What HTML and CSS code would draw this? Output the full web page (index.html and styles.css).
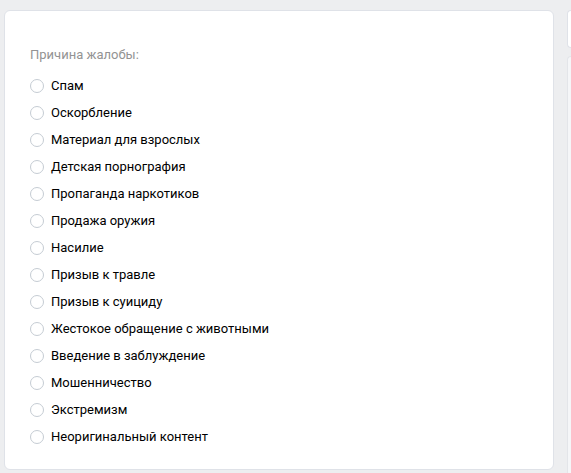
FILE: index.html
```html
<!DOCTYPE html>
<html lang="ru">

<head>
    <meta charset="UTF-8">
    <meta name="viewport" content="width=device-width, initial-scale=1.0">
    <title>Жалоба</title>
    <link rel="stylesheet" href="styles.css">
</head>

<body>

    <div class="page">
        <div class="report-box">
            <div class="report-title">Причина жалобы:</div>
            <div class="reasons">
                <label class="reason"><span class="radio"></span>Спам</label>
                <label class="reason"><span class="radio"></span>Оскорбление</label>
                <label class="reason"><span class="radio"></span>Материал для взрослых</label>
                <label class="reason"><span class="radio"></span>Детская порнография</label>
                <label class="reason"><span class="radio"></span>Пропаганда наркотиков</label>
                <label class="reason"><span class="radio"></span>Продажа оружия</label>
                <label class="reason"><span class="radio"></span>Насилие</label>
                <label class="reason"><span class="radio"></span>Призыв к травле</label>
                <label class="reason"><span class="radio"></span>Призыв к суициду</label>
                <label class="reason"><span class="radio"></span>Жестокое обращение с животными</label>
                <label class="reason"><span class="radio"></span>Введение в заблуждение</label>
                <label class="reason"><span class="radio"></span>Мошенничество</label>
                <label class="reason"><span class="radio"></span>Экстремизм</label>
                <label class="reason"><span class="radio"></span>Неоригинальный контент</label>
            </div>
        </div>

        <!-- edge of the next column -->
        <div class="side">
            <div class="side-top"></div>
            <div class="side-rest"></div>
        </div>
    </div>

</body>

</html>
```

FILE: styles.css
```css
* {
    box-sizing: border-box;
    margin: 0;
    padding: 0;
}

body {
    background-color: #edeef0;
    font-family: Roboto, "Liberation Sans", Arial, sans-serif;
    font-size: 13px;
    color: #000;
    overflow: hidden;
}

.page {
    display: flex;
    align-items: flex-start;
    width: 100%;
    padding: 10px 0 0 4px;
    gap: 13px;
}

.report-box {
    width: 550px;
    height: 460px;
    flex-shrink: 0;
    background-color: #fff;
    border: 1px solid #dfe2e8;
    border-radius: 6px;
    padding: 35px 0 0 25px;
}

.report-title {
    color: #939393;
    line-height: 18px;
    margin-bottom: 8px;
}

.reasons {
    display: flex;
    flex-direction: column;
}

.reason {
    display: flex;
    align-items: center;
    height: 27px;
    line-height: 16px;
    cursor: pointer;
}

.radio {
    width: 14px;
    height: 14px;
    border: 1px solid #c5ccd3;
    border-radius: 50%;
    margin-right: 7px;
    flex-shrink: 0;
}

.side {
    display: flex;
    flex-direction: column;
    gap: 8px;
    flex: 1;
    min-width: 0;
}

.side-top {
    height: 38px;
    background-color: #fff;
    border: 1px solid #dfe2e8;
    border-right: none;
    border-radius: 6px 0 0 6px;
}

.side-rest {
    height: 420px;
    background-color: #f5f6f8;
    border: 1px solid #e3e5e9;
    border-right: none;
    border-radius: 6px 0 0 6px;
}
```
